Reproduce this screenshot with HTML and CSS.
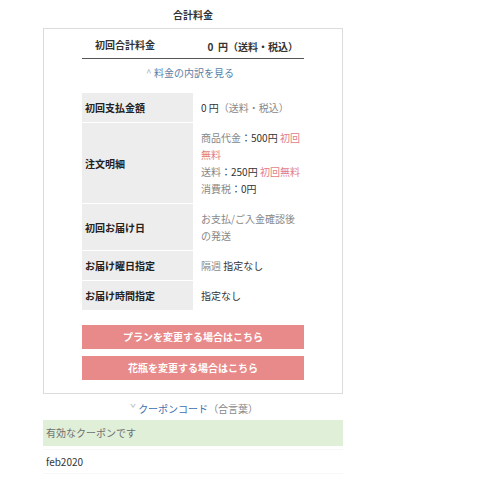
FILE: index.html
```html
<!DOCTYPE html>
<html lang="ja">
<head>
<meta charset="utf-8">
<link rel="stylesheet" href="styles.css">
</head>
<body>
<div class="wrap">
  <h2 class="title">合計料金</h2>
  <div class="card">
    <div class="total">
      <span class="total-label">初回合計料金</span>
      <span class="total-price">0&nbsp; 円（送料・税込）</span>
    </div>
    <div class="toggle"><span class="caret">^</span> 料金の内訳を見る</div>
    <table class="detail">
      <tr class="r1">
        <th>初回支払金額</th>
        <td><span class="dk">0 円</span><span class="gy">（送料・税込）</span></td>
      </tr>
      <tr>
        <th>注文明細</th>
        <td><span class="gy">商品代金</span><span class="dk">：500円</span> <span class="red">初回</span><br><span class="red">無料</span><br><span class="gy">送料</span><span class="dk">：250円</span> <span class="red">初回無料</span><br><span class="gy">消費税</span><span class="dk">：0円</span></td>
      </tr>
      <tr>
        <th>初回お届け日</th>
        <td class="gy">お支払/ご入金確認後<br>の発送</td>
      </tr>
      <tr>
        <th>お届け曜日指定</th>
        <td><span class="gy">隔週</span> <span class="dk">指定なし</span></td>
      </tr>
      <tr>
        <th>お届け時間指定</th>
        <td class="dk">指定なし</td>
      </tr>
    </table>
    <div class="buttons">
      <a class="btn">プランを変更する場合はこちら</a>
      <a class="btn">花瓶を変更する場合はこちら</a>
    </div>
  </div>
  <div class="coupon-toggle"><span class="caret">ˇ</span> <span class="blue">クーポンコード</span><span class="gy">（合言葉）</span></div>
  <div class="notice">有効なクーポンです</div>
  <div class="code">feb2020</div>
</div>
</body>
</html>
```
FILE: styles.css
```css
* { box-sizing: border-box; }
body {
  margin: 0;
  font-family: "Noto Sans CJK JP", "Noto Sans", sans-serif;
  font-size: 10px;
  color: #333;
  background: #fff;
}
.wrap {
  width: 300px;
  margin-left: 43px;
  padding-top: 8px;
}
.title {
  margin: 0 0 6px;
  font-size: 10px;
  line-height: 14px;
  font-weight: bold;
  text-align: center;
  color: #333;
}
.card {
  border: 1px solid #dcdcdc;
  padding: 11px 38px 13px;
}
.total {
  display: flex;
  justify-content: space-between;
  align-items: flex-end;
  border-bottom: 1px solid #555;
  padding: 0 6px 4px 13px;
  height: 19px;
}
.total-label { font-weight: bold; line-height: 14px; position: relative; top: -2px; }
.total-price { font-weight: bold; line-height: 14px; }
.toggle {
  margin-top: 7px;
  line-height: 14px;
  text-align: center;
  color: #5b7fa8;
  padding-right: 6px;
}
.caret { color: #aab4c0; }
.detail {
  margin-top: 12px;
  width: 100%;
  border-collapse: separate;
  border-spacing: 0 1px;
}
.detail th {
  width: 111px;
  background: #ededed;
  text-align: left;
  font-weight: bold;
  padding: 6px 0 6px 3px;
  line-height: 17px;
  color: #222;
}
.detail td {
  padding: 6px 4px 6px 8px;
  line-height: 17px;
  white-space: nowrap;
}
.dk { color: #333; }
.gy { color: #888; }
.red { color: #e27d86; }
.blue { color: #3f6fae; }
.buttons {
  margin-top: 14px;
  display: flex;
  flex-direction: column;
  gap: 7px;
}
.btn {
  display: block;
  height: 24px;
  line-height: 24px;
  background: #e88a8a;
  color: #fff;
  font-weight: bold;
  text-align: center;
}
.coupon-toggle {
  margin-top: 8px;
  line-height: 14px;
  text-align: center;
  padding-left: 2px;
}
.notice {
  margin-top: 4px;
  height: 26px;
  line-height: 26px;
  background: #dfefd8;
  color: #6e6e6e;
  padding-left: 3px;
}
.code {
  margin-top: 3px;
  border-top: 1px solid #f8f8f8;
  border-bottom: 1px solid #f8f8f8;
  height: 25px;
  line-height: 24px;
  padding-left: 3px;
  color: #333;
}
```
